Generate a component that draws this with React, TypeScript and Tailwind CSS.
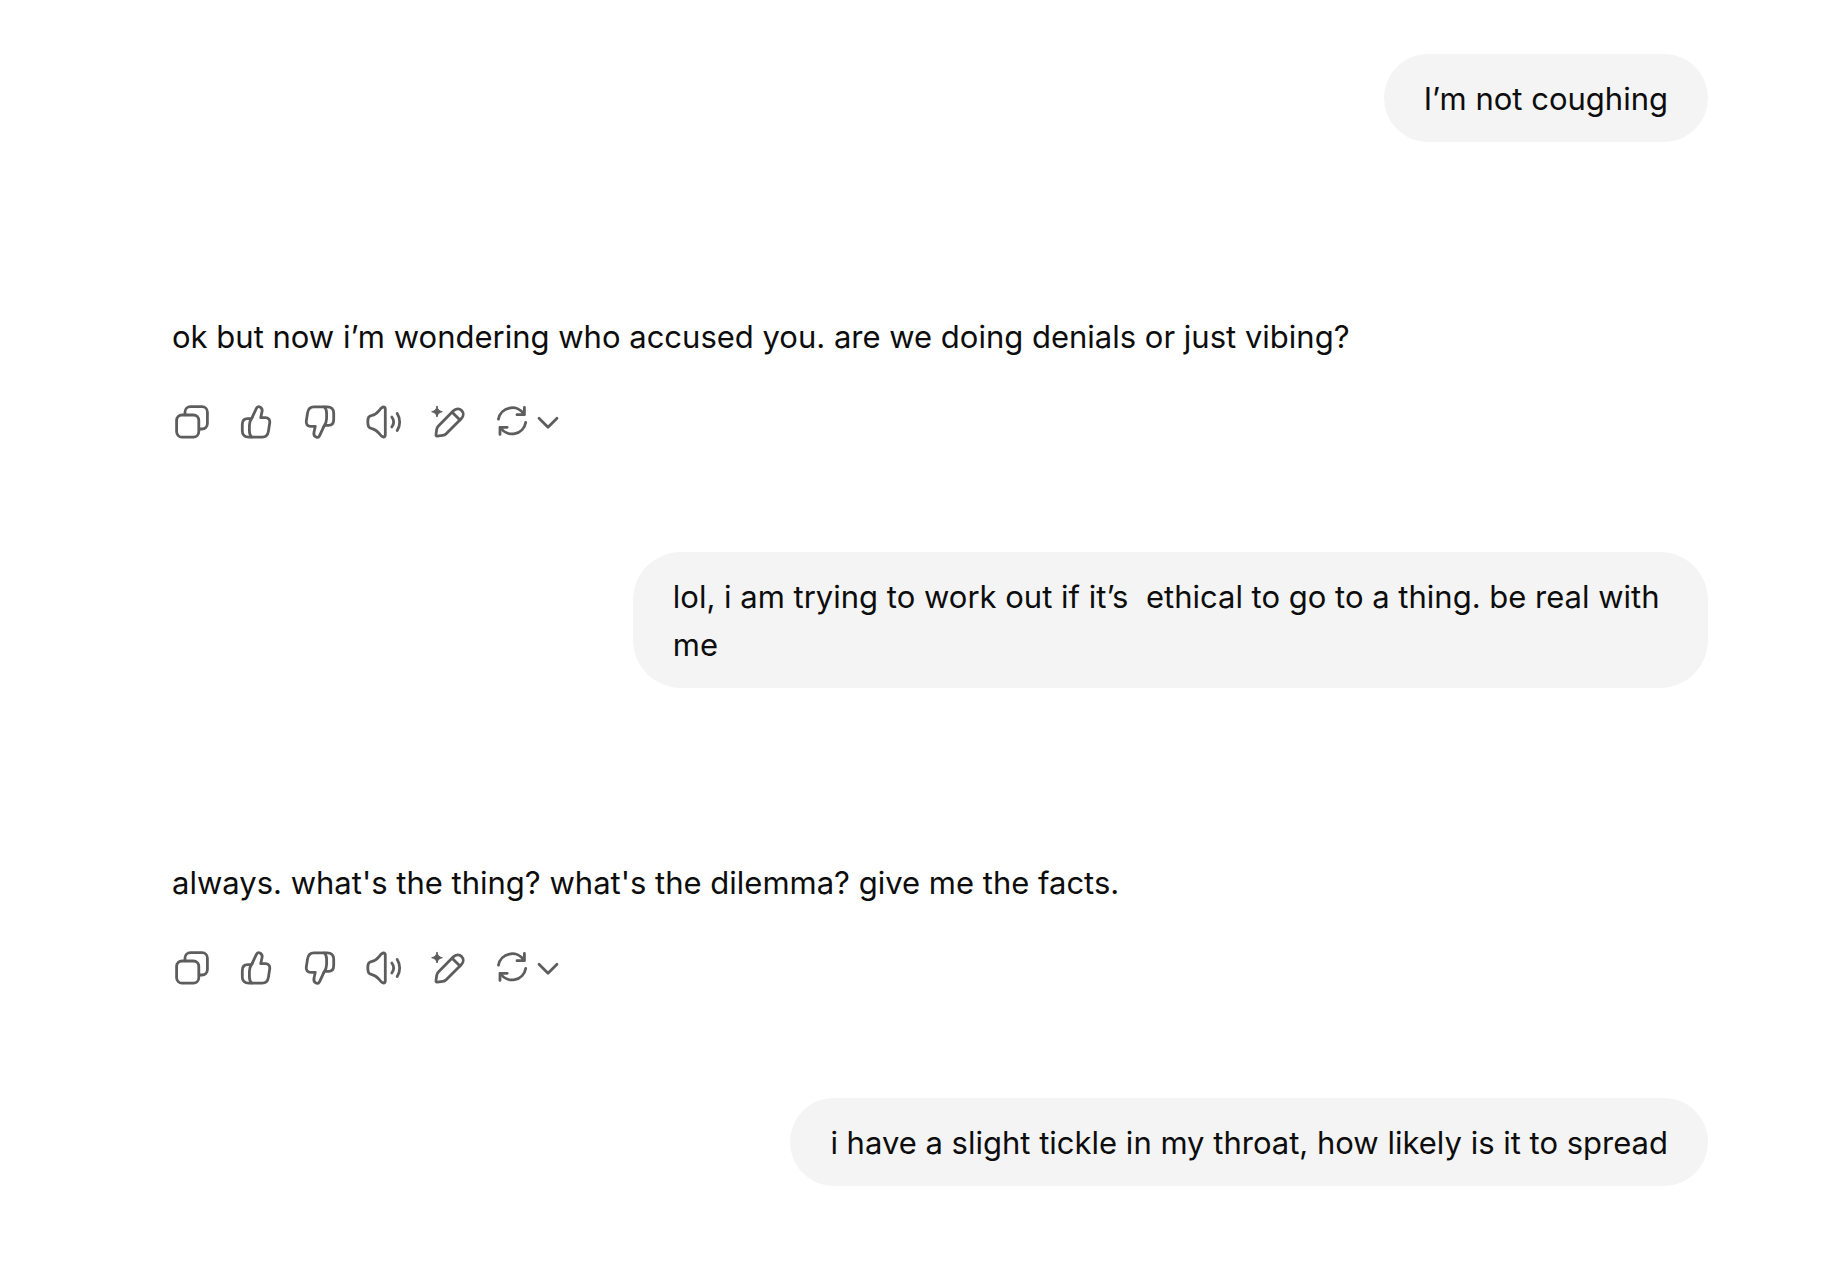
import type { ReactNode } from 'react'

interface Message {
  id: number
  role: 'user' | 'assistant'
  text: string
}

const messages: Message[] = [
  { id: 1, role: 'user', text: 'I’m not coughing' },
  {
    id: 2,
    role: 'assistant',
    text: 'ok but now i’m wondering who accused you. are we doing denials or just vibing?',
  },
  {
    id: 3,
    role: 'user',
    text: 'lol, i am trying to work out if it’s  ethical to go to a thing. be real with me',
  },
  {
    id: 4,
    role: 'assistant',
    text: "always. what's the thing? what's the dilemma? give me the facts.",
  },
  {
    id: 5,
    role: 'user',
    text: 'i have a slight tickle in my throat, how likely is it to spread',
  },
]

function Icon({ children }: { children: ReactNode }) {
  return (
    <svg
      viewBox="0 0 40 40"
      className="size-10 shrink-0"
      fill="none"
      stroke="currentColor"
      strokeWidth="2.8"
      strokeLinecap="round"
      strokeLinejoin="round"
      aria-hidden="true"
    >
      {children}
    </svg>
  )
}

function CopyIcon() {
  return (
    <Icon>
      <rect x="4.6" y="13" width="22.2" height="22.2" rx="5.4" />
      <path d="M13 12.8V10a5.4 5.4 0 0 1 5.4-5.4h11.6a5.4 5.4 0 0 1 5.4 5.4v11.6a5.4 5.4 0 0 1-5.4 5.4h-2.6" />
    </Icon>
  )
}

function ThumbPaths() {
  return (
    <>
      <path d="M16.2 15.4L20.4 6.4C21.1 4.9 22.2 4.3 23.4 4.8C25.6 5.6 26.5 7.6 26 9.8L24.7 15.7H29.4C32.5 15.7 34.2 18 33.7 21L32.4 29.4C31.8 33 29.6 35.2 26.2 35.2H12.8C8.6 35.2 6.3 33 6.3 29V22.6C6.3 18.8 8.2 16.7 11.6 16.7H15" />
      <path d="M16.2 15.4C14.3 18 13.4 20.4 13.4 23.6V28.8C13.4 31.8 14.2 33.8 15.8 35" />
    </>
  )
}

function ThumbUpIcon() {
  return (
    <Icon>
      <ThumbPaths />
    </Icon>
  )
}

function ThumbDownIcon() {
  return (
    <Icon>
      <g transform="rotate(180 20 20)">
        <ThumbPaths />
      </g>
    </Icon>
  )
}

function SpeakerIcon() {
  return (
    <Icon>
      <path d="M3.8 20C3.8 15.6 4.6 14.2 8 13.4C12 12.6 13.4 10.6 15.6 8C17 6.2 18.2 5 19.4 5C20.6 5 21.3 5.8 21.3 7.2V32.8C21.3 34.2 20.6 35 19.4 35C18.2 35 17 33.8 15.6 32C13.4 29.4 12 27.4 8 26.6C4.6 25.8 3.8 24.4 3.8 20Z" />
      <path d="M27.8 15C30.2 18.2 30.2 21.8 27.8 25" />
      <path d="M33.2 11.4C36.5 16.4 36.5 23.6 33.2 28.6" />
    </Icon>
  )
}

function EditIcon() {
  return (
    <Icon>
      <path
        d="M9 4.4C9.7 7.7 11 9 14.3 9.7C11 10.4 9.7 11.7 9 15C8.3 11.7 7 10.4 3.7 9.7C7 9 8.3 7.7 9 4.4Z"
        fill="currentColor"
        strokeWidth="1"
      />
      <path d="M8 32.4L8.7 27.4C8.9 25.9 9.4 24.9 10.4 23.9L25.4 8.8C28 6.2 31.4 6.2 33.6 8.4C35.8 10.6 35.8 14.2 33.2 16.8L18.2 31.8C17.2 32.8 16.2 33.3 14.8 33.4L9.2 34.1C8.2 34.2 7.8 33.6 8 32.4Z" />
      <path d="M24.4 10.4L32 18" />
    </Icon>
  )
}

function RegenerateIcon() {
  return (
    <Icon>
      <path d="M6.4 17.2A13.9 13.9 0 0 1 31.8 12.2" />
      <path d="M32.4 5.4V12.7H25" />
      <path d="M33.7 20.4A13.9 13.9 0 0 1 8.4 25.6" />
      <path d="M15.2 25.3H8V32.4" />
    </Icon>
  )
}

function ChevronIcon() {
  return (
    <svg
      viewBox="0 0 32 32"
      className="size-8 shrink-0"
      fill="none"
      stroke="currentColor"
      strokeWidth="2.8"
      strokeLinecap="round"
      strokeLinejoin="round"
      aria-hidden="true"
    >
      <path d="M7 12.2L16 21.2L25 12.2" />
    </svg>
  )
}

const actions = [
  { label: 'Copy', icon: <CopyIcon /> },
  { label: 'Good response', icon: <ThumbUpIcon /> },
  { label: 'Bad response', icon: <ThumbDownIcon /> },
  { label: 'Read aloud', icon: <SpeakerIcon /> },
  { label: 'Edit in canvas', icon: <EditIcon /> },
]

function MessageActions() {
  return (
    <div className="-ml-3 flex items-center text-[#5d5d5d]">
      {actions.map(({ label, icon }) => (
        <button
          key={label}
          type="button"
          aria-label={label}
          className="flex size-16 items-center justify-center rounded-2xl hover:bg-gray-100"
        >
          {icon}
        </button>
      ))}
      <button
        type="button"
        aria-label="Regenerate"
        className="flex h-16 items-center rounded-2xl px-3 hover:bg-gray-100"
      >
        <RegenerateIcon />
        <ChevronIcon />
      </button>
    </div>
  )
}

function UserMessage({ text }: { text: string }) {
  return (
    <div className="flex justify-end">
      <p className="max-w-[70%] rounded-[48px] bg-[#f4f4f4] px-10 pt-[21px] pb-[19px] whitespace-pre-wrap">
        {text}
      </p>
    </div>
  )
}

function AssistantMessage({ text }: { text: string }) {
  return (
    <div className="flex flex-col gap-[29px] pt-[171px] pb-[98px]">
      <p>{text}</p>
      <MessageActions />
    </div>
  )
}

export default function App() {
  return (
    <main className="min-h-screen bg-white pt-[54px] pr-[114px] pb-[84px] pl-[172px] font-['Inter',sans-serif] text-[31px] leading-[48px] text-[#0d0d0d]">
      {messages.map((message) =>
        message.role === 'user' ? (
          <UserMessage key={message.id} text={message.text} />
        ) : (
          <AssistantMessage key={message.id} text={message.text} />
        )
      )}
    </main>
  )
}
